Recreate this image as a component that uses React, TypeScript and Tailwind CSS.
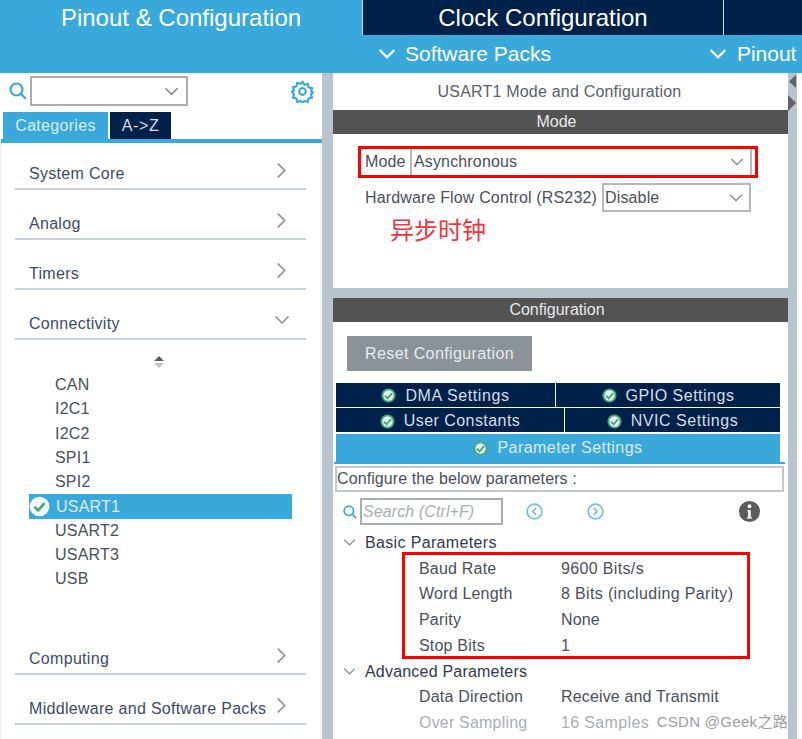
const font = "font-['Liberation_Sans',Arial,'Noto_Sans_CJK_SC',sans-serif]";

function Chevron({ dir = "down", className = "", weight = 1.5 }: { dir?: "down" | "right"; className?: string; weight?: number }) {
  return (
    <svg viewBox="0 0 16 16" fill="none" stroke="currentColor" strokeWidth={weight} className={className}>
      {dir === "down" ? <path d="M1.5 4.5 8 11l6.5-6.5" /> : <path d="M4.5 1.5 11 8l-6.5 6.5" />}
    </svg>
  );
}

function Check({ className = "", plain = false }: { className?: string; plain?: boolean }) {
  return (
    <svg viewBox="0 0 16 16" className={className}>
      <circle cx="8" cy="8" r="7.5" fill={plain ? "#f4f8f6" : "#43a877"} />
      {!plain && <circle cx="8" cy="8" r="5.5" fill="#e8f4ee" />}
      <path d="M4.2 8.2 7 11 11.8 5.4" fill="none" stroke="#43a877" strokeWidth="2" />
    </svg>
  );
}

function SearchIcon({ className = "" }: { className?: string }) {
  return (
    <svg viewBox="0 0 18 18" fill="none" stroke="#38a8dc" strokeWidth="2.2" className={className}>
      <circle cx="7.5" cy="7.5" r="6" />
      <path d="M12 12l5 5" />
    </svg>
  );
}

function Category({ label, open = false }: { label: string; open?: boolean }) {
  return (
    <div className="mx-[13px] flex h-[50px] w-[291px] items-end justify-between border-b-2 border-[#c9d0d6] pb-[4px] pl-[14px] pr-[16px]">
      <span className="text-[16px] leading-[20px] tracking-[0.3px] text-[#3d4a6b]">{label}</span>
      <Chevron dir={open ? "down" : "right"} className={open ? "mb-[6px] h-[16px] w-[16px] text-[#8a8f94]" : "mb-[5px] h-[17px] w-[17px] text-[#8a8f94]"} />
    </div>
  );
}

function PeripheralRow({ label }: { label: string }) {
  return <div className="h-[24.3px] pl-[53px] text-[16px] leading-[24px] tracking-[0.2px] text-[#4a4f5a]">{label}</div>;
}

function TabButton({ label, className, spacing }: { label: string; className: string; spacing: string }) {
  return (
    <div className={`flex h-[24px] items-center justify-center gap-[9px] bg-[#00224a] text-[16px] text-[#d5dde6] ${spacing} ${className}`}>
      <Check className="h-[15px] w-[15px]" />
      {label}
    </div>
  );
}

function ParamRow({ label, value, muted = false, tight = false }: { label: string; value: string; muted?: boolean; tight?: boolean }) {
  return (
    <div className={`flex h-[25.6px] items-center text-[16px] ${muted ? "text-[#a9adb2]" : "text-[#4a4f5a]"}`}>
      <span className="w-[142px] shrink-0 tracking-[0.2px]">{label}</span>
      <span className={`whitespace-nowrap ${tight ? "tracking-[0.15px]" : "tracking-[0.35px]"}`}>{value}</span>
    </div>
  );
}

export default function App() {
  return (
    <div className={`${font} h-[739px] w-[802px] overflow-hidden bg-white`}>
      <header className="bg-[#39a9dc]">
        <div className="flex h-[35px]">
          <div className="flex w-[362px] items-center justify-center text-[24px] text-white">Pinout &amp; Configuration</div>
          <div className="flex w-[362px] items-center justify-center border-x border-[#cfd6dc] bg-[#00224a] text-[24px] text-white">
            Clock Configuration
          </div>
          <div className="flex-1 bg-[#00224a]" />
        </div>
        <div className="flex h-[38px] items-center text-[21px] text-white">
          <Chevron weight={2} className="ml-[378px] h-[18px] w-[18px]" />
          <span className="ml-[9px]">Software Packs</span>
          <Chevron weight={2} className="ml-[158px] h-[18px] w-[18px]" />
          <span className="ml-[10px]">Pinout</span>
        </div>
      </header>

      <div className="flex h-[666px]">
        <aside className="flex w-[322px] shrink-0 flex-col">
          <div className="flex h-[39px] items-start pt-[3px]">
            <SearchIcon className="ml-[9px] mt-[6px] h-[18px] w-[18px]" />
            <div className="ml-[3px] flex h-[30px] w-[158px] items-center justify-end border-2 border-[#a9adb0] pr-[7px]">
              <Chevron className="h-[15px] w-[15px] text-[#80858a]" />
            </div>
            <svg viewBox="0 0 24 24" fill="none" stroke="#38a8dc" strokeWidth="2.2" className="ml-[103px] mt-[4px] h-[23px] w-[23px]">
              <circle cx="12" cy="12" r="3.5" />
              <path d="M12 2l2 3 3.5-1 .8 3.6 3.6.9-1 3.5 2.1 1-2.1 2 1 3.4-3.6.9-.8 3.6-3.5-1-2 2.1-2-2.1-3.5 1-.8-3.6-3.6-.9 1-3.4L1 12l2.1-1-1-3.5 3.6-.9.8-3.6 3.5 1z" />
            </svg>
          </div>
          <div className="flex h-[27px] pl-[3px] text-[16px]">
            <div className="flex w-[105px] items-center justify-center bg-[#39a9dc] tracking-[0.3px] text-[#dcecf5]">Categories</div>
            <div className="ml-[2px] flex w-[61px] items-center justify-center bg-[#00224a] tracking-[0.6px] text-[#d5dde6]">A-&gt;Z</div>
          </div>
          <div className="ml-px h-[4px] bg-[#39a9dc]" />
          <nav className="flex-1 border-x-[2px] border-x-[#f1f3f4] pr-[2px]">
            <div className="-mt-[3px]">
              <Category label="System Core" />
              <Category label="Analog" />
              <Category label="Timers" />
              <Category label="Connectivity" open />
            </div>
            <div className="flex h-[29px] items-end justify-center pr-[2px]">
              <svg viewBox="0 0 10 12" className="mb-[1px] h-[12px] w-[10px]">
                <path d="M5 0l5 5H0z" fill="#5c5f62" />
                <path d="M5 12l5-5H0z" fill="#bfc2c5" />
              </svg>
            </div>
            <div className="pt-[4px]">
              <PeripheralRow label="CAN" />
              <PeripheralRow label="I2C1" />
              <PeripheralRow label="I2C2" />
              <PeripheralRow label="SPI1" />
              <PeripheralRow label="SPI2" />
              <div className="ml-[27px] flex h-[24.3px] w-[263px] items-center bg-[#39a9dc] text-[16px] tracking-[0.2px] text-[#dcecf5]">
                <Check plain className="h-[21px] w-[21px] shrink-0" />
                <span className="ml-[6px]">USART1</span>
              </div>
              <PeripheralRow label="USART2" />
              <PeripheralRow label="USART3" />
              <PeripheralRow label="USB" />
            </div>
            <div className="mt-[33px]">
              <Category label="Computing" />
              <Category label="Middleware and Software Packs" />
            </div>
          </nav>
        </aside>

        <div className="w-[11px] shrink-0 bg-[#b8c4cc]" />

        <main className="flex w-[455px] shrink-0 flex-col">
          <div className="flex h-[37px] items-center justify-center pr-[2px] text-[16px] tracking-[0.2px] text-[#5a5f66]">
            USART1 Mode and Configuration
          </div>
          <div className="flex h-[24px] items-center justify-center bg-[#535353] pr-[8px] text-[16px] text-[#e8e8e8]">Mode</div>
          <section className="h-[154px] text-[16px] tracking-[0.15px] text-[#4a4f5a]">
            <div className="ml-[25px] mt-[12px] flex h-[32px] w-[400px] items-center border-[3px] border-[#ff0000] pl-[4px] pr-[3px]">
              <span className="w-[45px]">Mode</span>
              <div className="flex h-full flex-1 items-center justify-between border-x-2 border-[#b5b8bb] pl-[2px] pr-[6px]">
                Asynchronous
                <Chevron className="h-[14px] w-[14px] text-[#80858a]" />
              </div>
            </div>
            <div className="ml-[32px] mt-[5px] flex h-[29px] items-center">
              <span className="w-[237px] whitespace-nowrap">Hardware Flow Control (RS232)</span>
              <div className="flex h-[29px] w-[149px] items-center justify-between border-2 border-[#b5b8bb] pl-[1px] pr-[6px]">
                Disable
                <Chevron className="h-[14px] w-[14px] text-[#80858a]" />
              </div>
            </div>
            <div className="ml-[57px] mt-[3px] text-[24px] leading-[32px] tracking-normal text-[#f5333f]">异步时钟</div>
          </section>
          <div className="h-[10px] bg-[#b8c4cc]" />
          <div className="flex h-[24px] items-center justify-center bg-[#535353] pr-[7px] text-[16px] text-[#e8e8e8]">Configuration</div>

          <div className="flex-1">
            <div className="ml-[14px] mt-[14px] flex h-[35px] w-[185px] items-center justify-center bg-[#8d9297] text-[16px] tracking-[0.4px] text-[#e8eaec]">
              Reset Configuration
            </div>
            <div className="ml-[3px] mt-[12px] w-[444px]">
              <div className="flex gap-px">
                <TabButton label="DMA Settings" spacing="tracking-[0.6px] pt-px" className="w-[219px]" />
                <TabButton label="GPIO Settings" spacing="tracking-[0.5px] pt-px" className="flex-1" />
              </div>
              <div className="mt-px flex gap-px">
                <TabButton label="User Constants" spacing="tracking-[0.45px] pt-[2px]" className="w-[228px]" />
                <TabButton label="NVIC Settings" spacing="tracking-[0.55px] pt-[2px]" className="flex-1" />
              </div>
              <div className="mt-[2px] flex h-[28px] items-center justify-center gap-[9px] bg-[#39a9dc] text-[16px] tracking-[0.45px] text-[#dcecf5]">
                <Check className="h-[15px] w-[15px]" />
                Parameter Settings
              </div>
            </div>
            <div className="ml-px h-[2px] w-[451px] bg-[#39a9dc]" />
            <div className="ml-[2px] mt-[2px] flex h-[26px] w-[449px] items-center border-2 border-[#c4c7ca] text-[16px] tracking-[0.1px] text-[#4a4f5a]">
              Configure the below parameters :
            </div>
            <div className="mt-[6px] flex h-[27px] items-center">
              <SearchIcon className="ml-[10px] h-[14px] w-[14px]" />
              <div className="ml-[3px] flex h-[27px] w-[143px] items-center border-2 border-[#a9adb0] pl-px text-[16px] italic tracking-[0.1px] text-[#a9adb2]">
                Search (Ctrl+F)
              </div>
              <svg viewBox="0 0 18 18" fill="none" stroke="#6fbfe6" strokeWidth="1.8" className="ml-[23px] h-[17px] w-[17px]">
                <circle cx="9" cy="9" r="7.8" />
                <path d="M10.8 5.5 7.3 9l3.5 3.5" />
              </svg>
              <svg viewBox="0 0 18 18" fill="none" stroke="#6fbfe6" strokeWidth="1.8" className="ml-[44px] h-[17px] w-[17px]">
                <circle cx="9" cy="9" r="7.8" />
                <path d="M7.2 5.5 10.7 9l-3.5 3.5" />
              </svg>
              <svg viewBox="0 0 20 20" className="ml-[135px] h-[21px] w-[21px]">
                <circle cx="10" cy="10" r="10" fill="#5b5b5b" />
                <circle cx="10" cy="5" r="1.8" fill="#fff" />
                <path d="M8 8.5h3.2v7H12.5v1.2h-5v-1.2H8.7V9.7H8z" fill="#fff" />
              </svg>
            </div>
            <div className="mt-[5px] flex h-[25px] items-center text-[16px] tracking-[0.35px] text-[#33384a]">
              <Chevron className="ml-[10px] h-[13px] w-[13px] text-[#80858a]" />
              <span className="ml-[9px]">Basic Parameters</span>
            </div>
            <div className="ml-[69px] mt-[-3px] h-[107px] w-[348px] border-[3px] border-[#ff0000] pl-[14px] pt-px">
              <ParamRow label="Baud Rate" value="9600 Bits/s" />
              <ParamRow label="Word Length" value="8 Bits (including Parity)" />
              <ParamRow label="Parity" value="None" tight />
              <ParamRow label="Stop Bits" value="1" />
            </div>
            <div className="flex h-[25px] items-center text-[16px] tracking-[0.2px] text-[#33384a]">
              <Chevron className="ml-[10px] h-[13px] w-[13px] text-[#80858a]" />
              <span className="ml-[9px]">Advanced Parameters</span>
            </div>
            <div className="relative ml-[86px]">
              <ParamRow label="Data Direction" value="Receive and Transmit" tight />
              <div className="pt-px">
                <ParamRow label="Over Sampling" value="16 Samples" muted />
              </div>
              <span className="absolute right-[0px] top-[27px] whitespace-nowrap text-[15px] tracking-[0.3px] text-[#9a9da1]">CSDN @Geek之路</span>
            </div>
          </div>
        </main>

        <div className="relative w-[9px] shrink-0 bg-[#b8c4cc]">
          <svg viewBox="0 0 9 36" className="absolute left-0 top-[2px] h-[36px] w-[9px]">
            <path d="M8 0v13L1 6.5z" fill="#5f6366" />
            <path d="M0 20v16l8-8z" fill="#5f6366" />
          </svg>
        </div>
      </div>
    </div>
  );
}
